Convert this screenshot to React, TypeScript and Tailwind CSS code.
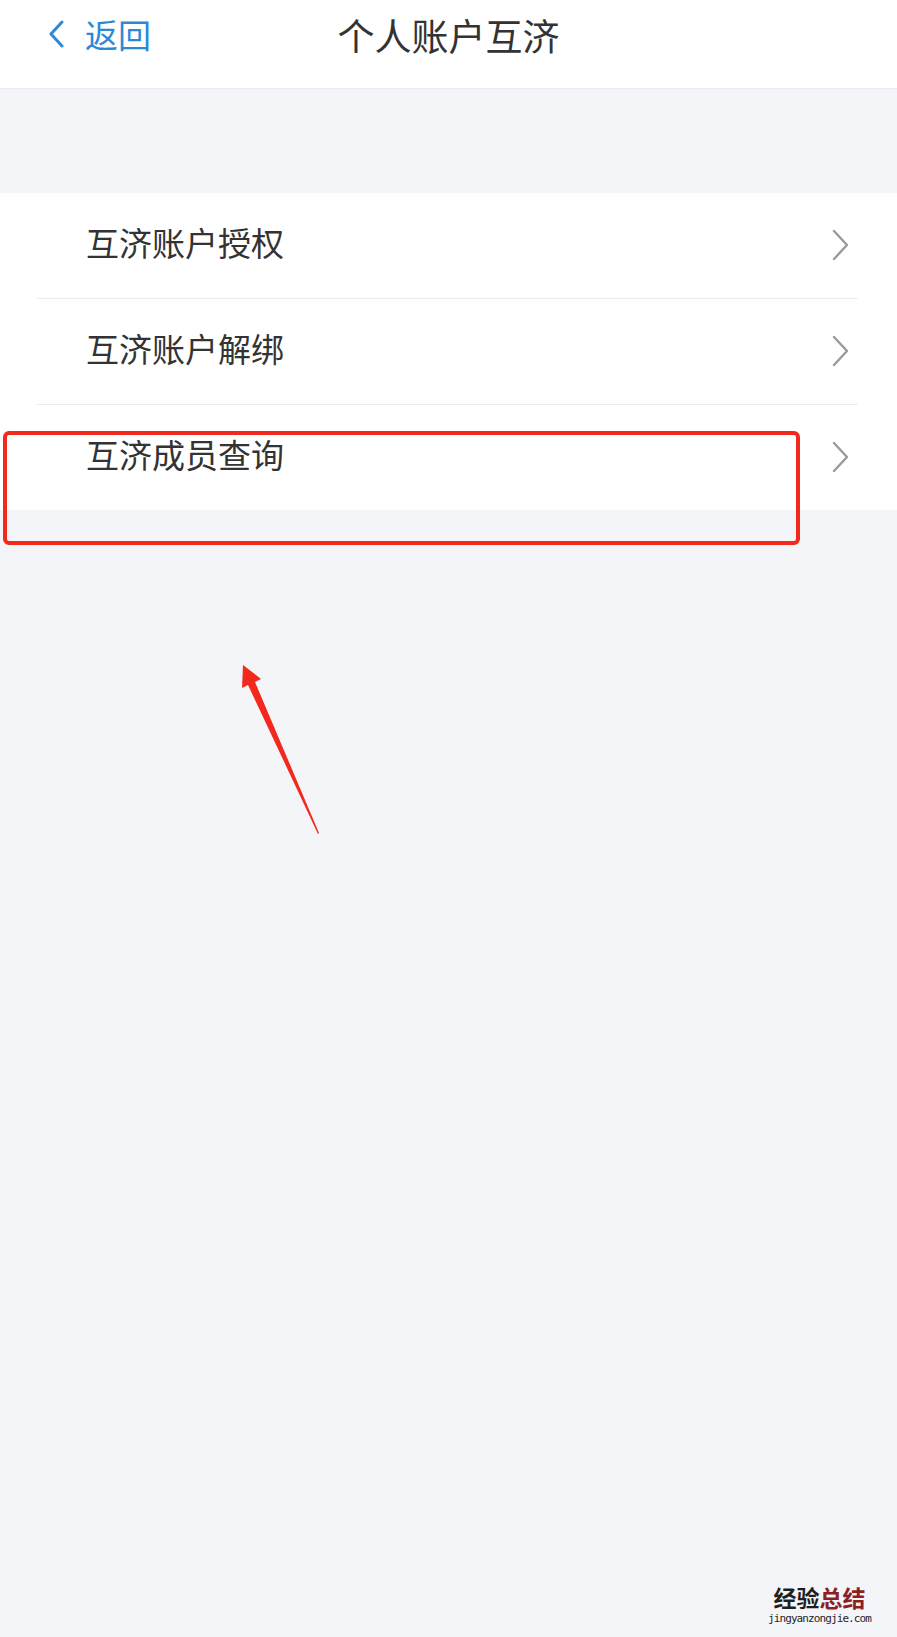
const rows = ["互济账户授权", "互济账户解绑", "互济成员查询"];

function Chevron() {
  return (
    <svg width="20" height="32" viewBox="0 0 20 32" className="shrink-0">
      <path d="M3 2 L16 16 L3 30" fill="none" stroke="#9a9a9a" strokeWidth="2.4" strokeLinecap="round" strokeLinejoin="round" />
    </svg>
  );
}

export default function App() {
  return (
    <main
      className="relative min-h-[1637px] w-[897px] bg-[#f4f5f9] overflow-hidden"
      style={{ fontFamily: '"Noto Sans CJK SC", "Noto Sans", sans-serif' }}
    >
      <header className="relative h-[89px] bg-white border-b border-[#ececf0] flex items-center justify-center">
        <div className="absolute left-[47px] top-[14px] flex items-center gap-[18px] text-[#2e88d8]">
          <svg width="20" height="28" viewBox="0 0 20 28">
            <path d="M15 2 L4 14 L15 26" fill="none" stroke="#2e88d8" strokeWidth="3" strokeLinecap="round" strokeLinejoin="round" />
          </svg>
          <span className="text-[33px] leading-[40px]">返回</span>
        </div>
        <h1 className="text-[37px] leading-[44px] text-[#333333] -mt-[18px]">个人账户互济</h1>
      </header>

      <div className="h-[104px]" />

      <section className="bg-white">
        {rows.map((label, i) => (
          <div key={label}>
            <div className="h-[105px] flex items-center justify-between pl-[86px] pr-[46px]">
              <span className="text-[33px] leading-[40px] text-[#333333] -mt-[8px]">{label}</span>
              <div className="-mt-[2px]">
                <Chevron />
              </div>
            </div>
            {i < rows.length - 1 && <div className="ml-[37px] mr-[39px] h-px bg-[#ebebeb]" />}
          </div>
        ))}
      </section>

      {/* annotation box */}
      <div className="absolute left-[3px] top-[431px] w-[797px] h-[114px] border-[4px] border-[#f2291d] rounded-[6px]" />

      {/* annotation arrow */}
      <svg className="absolute left-[230px] top-[655px]" width="100" height="190" viewBox="0 0 100 190">
        <polygon points="13,10 31,24 25,27 89,178 88,179 18,30 12,33" fill="#f2291d" />
      </svg>

      {/* watermark */}
      <div className="absolute left-[768px] top-[1582px] flex flex-col items-center">
        <div className="text-[23px] leading-[30px] font-bold">
          <span className="text-[#1f1f1f]">经验</span>
          <span className="text-[#8e1f1f]">总结</span>
        </div>
        <div
          className="text-[11px] leading-[14px] text-[#1f1f1f]"
          style={{ fontFamily: '"DejaVu Sans Mono", monospace', letterSpacing: "-0.9px" }}
        >
          jingyanzongjie.com
        </div>
      </div>
    </main>
  );
}
